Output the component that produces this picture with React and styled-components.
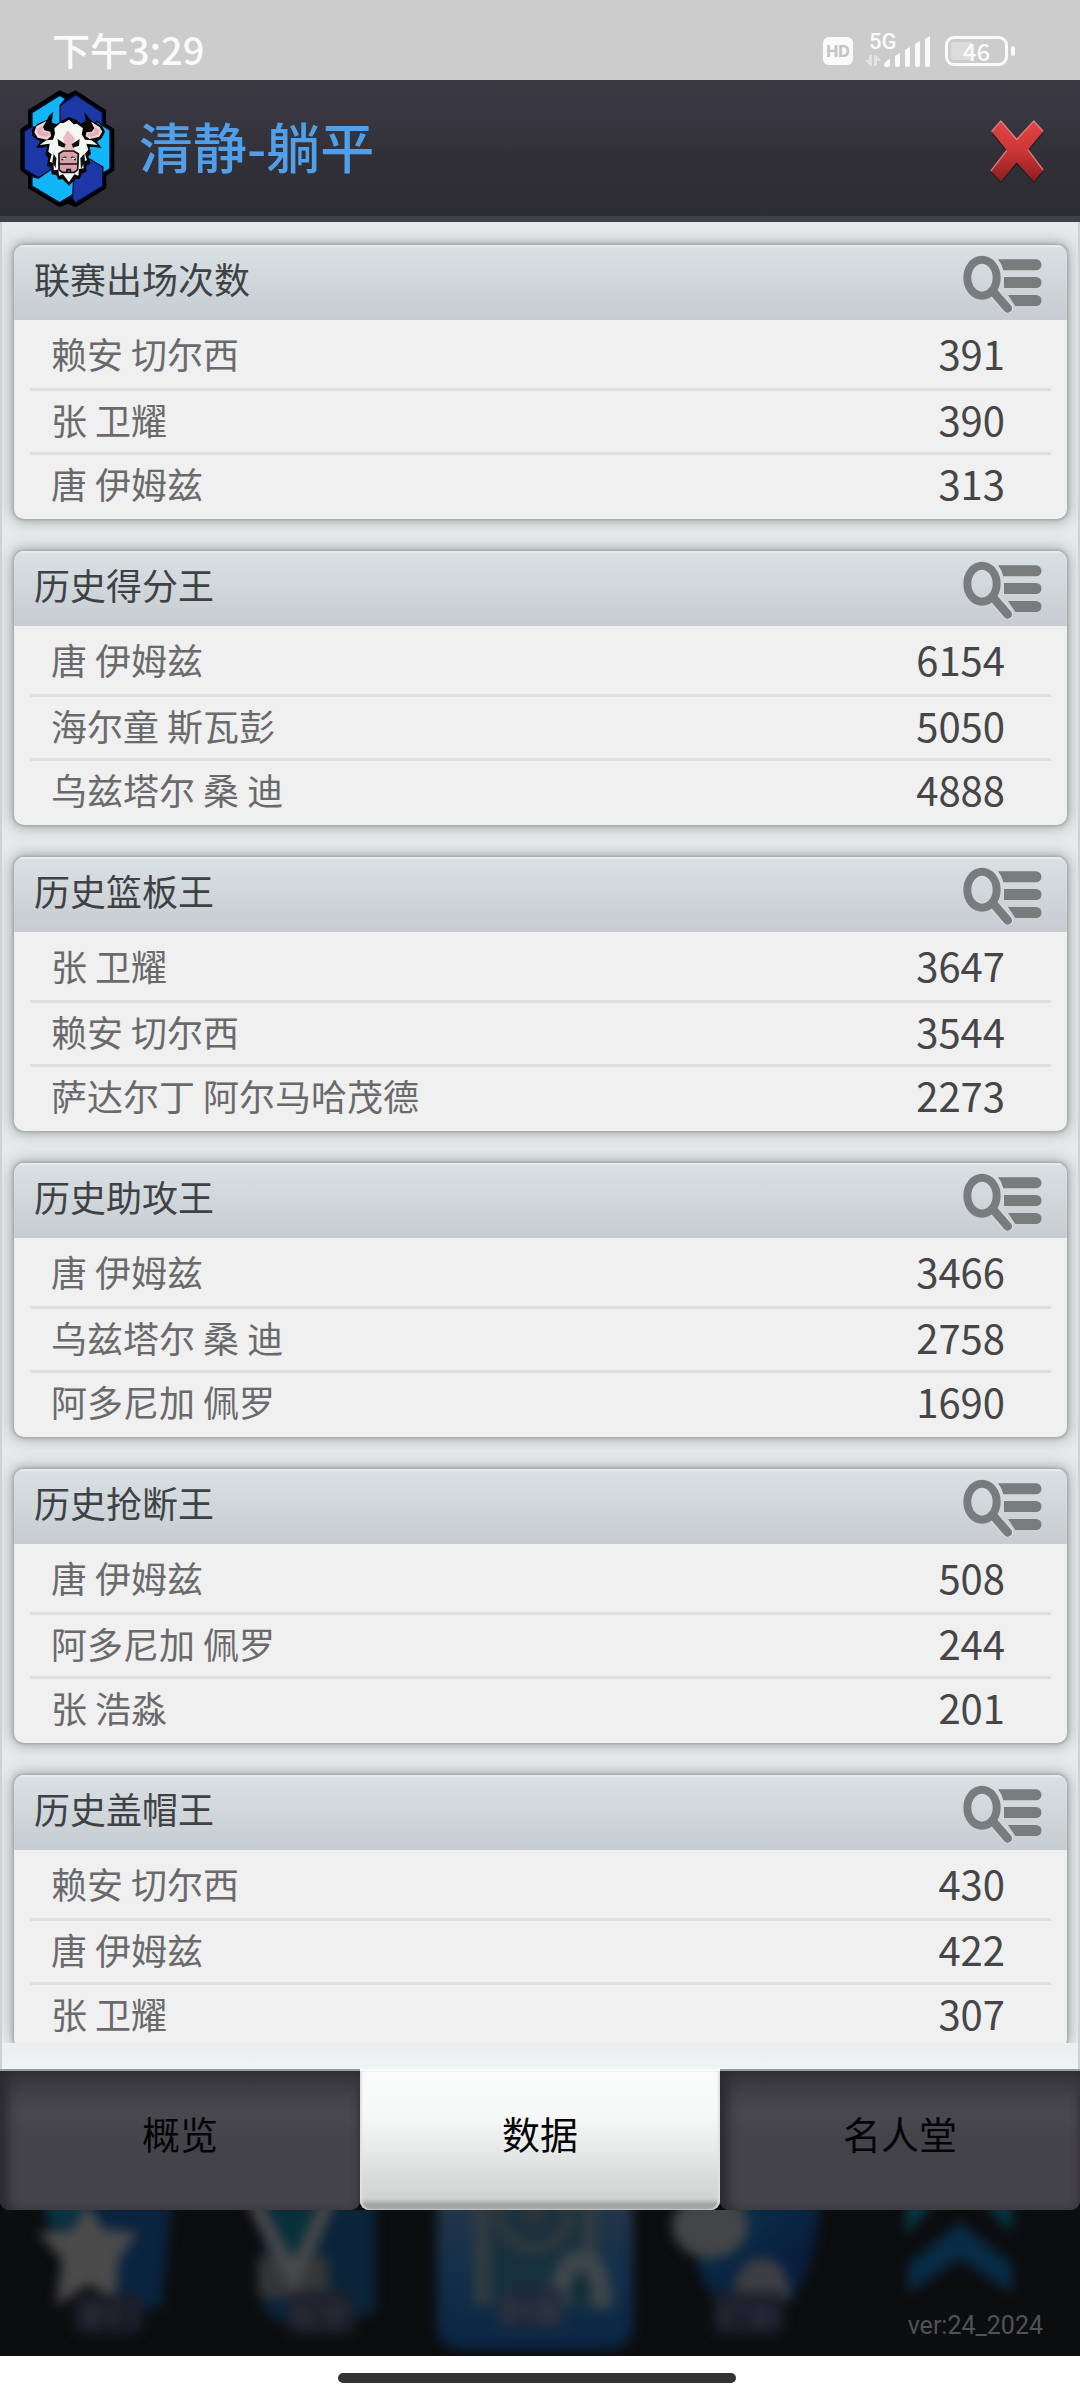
import React from "react";
import styled, { createGlobalStyle } from "styled-components";

const boards = [
  {
    title: "联赛出场次数",
    players: [
      { name: "赖安 切尔西", value: 391 },
      { name: "张 卫耀", value: 390 },
      { name: "唐 伊姆兹", value: 313 },
    ],
  },
  {
    title: "历史得分王",
    players: [
      { name: "唐 伊姆兹", value: 6154 },
      { name: "海尔童 斯瓦彭", value: 5050 },
      { name: "乌兹塔尔 桑 迪", value: 4888 },
    ],
  },
  {
    title: "历史篮板王",
    players: [
      { name: "张 卫耀", value: 3647 },
      { name: "赖安 切尔西", value: 3544 },
      { name: "萨达尔丁 阿尔马哈茂德", value: 2273 },
    ],
  },
  {
    title: "历史助攻王",
    players: [
      { name: "唐 伊姆兹", value: 3466 },
      { name: "乌兹塔尔 桑 迪", value: 2758 },
      { name: "阿多尼加 佩罗", value: 1690 },
    ],
  },
  {
    title: "历史抢断王",
    players: [
      { name: "唐 伊姆兹", value: 508 },
      { name: "阿多尼加 佩罗", value: 244 },
      { name: "张 浩淼", value: 201 },
    ],
  },
  {
    title: "历史盖帽王",
    players: [
      { name: "赖安 切尔西", value: 430 },
      { name: "唐 伊姆兹", value: 422 },
      { name: "张 卫耀", value: 307 },
    ],
  },
];

const tabs = ["概览", "数据", "名人堂"];

const TeamLogo = () => (
  <svg width="96" height="118" viewBox="28 31 288 354" aria-hidden="true">
    <path
      d="M150 32 174 43 198 32 289 91V132L314 148V272L290 289V326L198 383 174 372 150 383 55 326V289L32 272V148L55 132V91Z"
      fill="#000"
    />
    <g stroke="#04103a" strokeWidth="4">
      <path d="M67 99 150 47 168 57 152 77V150L67 180Z" fill="#12b6f6" />
      <path d="M198 45 278 98V134L240 180H152V77Z" fill="#1c37a6" />
      <path d="M262 125 301 152V267L279 281V262L225 232Z" fill="#12b6f6" />
      <path d="M44 155 68 140 130 180 128 268 86 294 44 268Z" fill="#1c37a6" />
      <path d="M67 290 86 296 128 266 192 300V343L150 369 67 319Z" fill="#12b6f6" />
      <path d="M240 238 279 262V319L198 369 188 356 192 300Z" fill="#1c37a6" />
    </g>
    <path
      d="M131 96 118 108 112 120 84 132 66 150 68 168 82 180 92 184 80 204 98 204 112 200 108 226 116 234 112 258 124 264 126 284 140 286 146 300 158 298 178 318 198 298 210 298 216 282 230 276 230 258 242 252 236 230 244 224 240 202 256 202 276 206 262 186 276 176 286 156 278 140 244 122 224 98 228 124 214 132 202 122 178 112 154 124 140 134 126 128Z"
      fill="#050505"
    />
    <path d="M110 124 80 140 74 158 84 174 112 180 124 170 122 156 104 152 100 142Z" fill="#f0d5d8" />
    <path d="M100 136 82 148 86 166 108 172 120 166 116 158 98 156Z" fill="#e5aebb" />
    <path d="M244 126 270 142 278 156 268 172 240 178 228 170 230 158 246 156 254 146Z" fill="#f0d5d8" />
    <path d="M256 142 270 152 264 166 244 172 232 166 236 160 252 158Z" fill="#e5aebb" />
    <path
      d="M178 120 162 130 152 130 134 146 136 162 130 180 110 182 90 196 120 192 116 216 126 224 120 246 132 250 132 272 146 270 148 288 160 284 178 308 194 284 206 288 208 268 222 266 220 246 232 242 226 222 236 210 230 192 264 196 246 182 226 180 216 164 220 146 202 132 192 134Z"
      fill="#f6f6f4"
    />
    <path d="M174 152 160 176 166 198 160 212H196L188 198 196 176Z" fill="#e9bdc4" />
    <path d="M144 178 168 194 164 204 146 198Z" fill="#111" />
    <path d="M210 178 186 194 190 204 208 198Z" fill="#111" />
    <path d="M132 222 140 236 138 266 128 246Z" fill="#111" />
    <path d="M224 222 212 236 214 268 226 244Z" fill="#111" />
    <path
      d="M148 222 160 214H192L206 222 204 270 194 278H158L148 270Z"
      fill="#dba0aa"
      stroke="#111"
      strokeWidth="5"
    />
    <path
      d="M147 253H206M158 242Q158 230 170 234M196 242Q196 230 184 234M172 278V270H182V278"
      fill="none"
      stroke="#111"
      strokeWidth="5"
    />
    <path d="M158 236H168M186 236H196" stroke="#fff" strokeWidth="4" />
  </svg>
);

const CloseIcon = () => (
  <svg width="62" height="70" viewBox="20 48 186 212" aria-hidden="true">
    <defs>
      <linearGradient id="closeFill" x1="0" y1="0" x2="0" y2="1">
        <stop offset="0" stopColor="#e24444" />
        <stop offset="0.5" stopColor="#cd3636" />
        <stop offset="1" stopColor="#8e1c20" />
      </linearGradient>
    </defs>
    <path
      d="M64 68 112 124 164 68 192 101 146 156 192 218 164 252 112 196 64 252 34 220 82 158 36 101Z"
      fill="#201a20"
      opacity="0.8"
    />
    <path
      d="M64 62 112 118 164 62 192 95 146 150 192 212 164 246 112 188 64 246 34 214 82 152 36 95Z"
      fill="url(#closeFill)"
    />
    <path
      d="M36 95 64 63 112 119 164 63 192 94M34 214 82 152M146 150 192 211"
      fill="none"
      stroke="#d98084"
      strokeWidth="4"
    />
  </svg>
);

const SearchListIcon = () => (
  <svg width="80" height="58" viewBox="69 45 240 174" aria-hidden="true">
    <g fill="#797c7d">
      <path d="M174 58H288A16 16 0 0 1 288 91H190Q186 72 174 58Z" />
      <path d="M192 111H288A16 16 0 0 1 288 144H192Z" />
      <path d="M204 165H288A16 16 0 0 1 288 198H226Z" />
    </g>
    <path d="M160 156 203 205" stroke="#d6dbde" strokeWidth="34" strokeLinecap="round" />
    <ellipse cx="126" cy="113" rx="44" ry="54" fill="none" stroke="#797c7d" strokeWidth="24" />
    <path d="M158 153 203 205" stroke="#797c7d" strokeWidth="26" strokeLinecap="round" />
  </svg>
);

const SignalIcon = () => (
  <svg width="68" height="34" viewBox="0 0 68 34" fill="#fafafa" aria-hidden="true">
    <g opacity="0.5">
      <path d="M4 21H7V32H5L0 26H4Z" />
      <path d="M9 32V21H11L16 27H12V32Z" />
    </g>
    <path d="M19 31Q19 28 25 25V31Q25 33 23 33H21Q19 33 19 31Z" />
    <path d="M30 22 35 19V31Q35 33 33 33H32Q30 33 30 31Z" />
    <path d="M40 16 45 13V31Q45 33 43 33H42Q40 33 40 31Z" />
    <path d="M50 10 55 7V31Q55 33 53 33H52Q50 33 50 31Z" />
    <path d="M60 5 65 2V31Q65 33 63 33H62Q60 33 60 31Z" />
  </svg>
);

// dimmed game menu that shows through under the tab bar
const MenuBackdrop = () => (
  <svg width="100%" height="146" viewBox="0 0 1080 146" preserveAspectRatio="none" aria-hidden="true">
    <defs>
      <filter id="soft" x="-10%" y="-10%" width="120%" height="120%" colorInterpolationFilters="sRGB">
        <feGaussianBlur stdDeviation="6" />
      </filter>
      <linearGradient id="slot" x1="0" y1="0" x2="0" y2="1">
        <stop offset="0" stopColor="#2b3847" />
        <stop offset="0.5" stopColor="#14304a" />
        <stop offset="1" stopColor="#0a2544" />
      </linearGradient>
      <linearGradient id="globe" x1="0" y1="0" x2="1" y2="1">
        <stop offset="0" stopColor="#07394a" />
        <stop offset="0.7" stopColor="#0a1d40" />
        <stop offset="1" stopColor="#08243f" />
      </linearGradient>
    </defs>
    <g filter="url(#soft)">
      <path d="M42-10H172L162 96 130 104 60 40Z" fill="#0a233f" />
      <path d="M44-10H88L70 16 48 14Z" fill="#083442" />
      <path d="M88-6 104 20 138 22 118 50 116 90 88 74 56 96 62 50 38 22 72 20Z" fill="#4b4b4b" />
      <rect x="74" y="84" width="68" height="40" rx="8" fill="#191c27" />
      <path d="M82 100H104M82 110H100M92 92V118M114 94V116M122 98H134V116" stroke="#2d303c" strokeWidth="5" />

      <path d="M262-10H376V100L350 112H276L262 96Z" fill="#0b2439" />
      <path d="M270-10H320L294 50Z" fill="#08303b" />
      <rect x="258" y="46" width="70" height="42" rx="6" fill="#343638" />
      <path d="M254-8 294 68 328-8" fill="none" stroke="#48494a" strokeWidth="15" />
      <rect x="288" y="82" width="66" height="42" rx="8" fill="#1d202b" />
      <path d="M296 92V116M308 92V118M320 100H348M334 92V118" stroke="#2d303c" strokeWidth="5" />

      <rect x="437" y="-30" width="196" height="170" rx="24" fill="url(#slot)" />
      <rect x="474" y="-20" width="126" height="120" fill="#17303e" />
      <path d="M482-10V94M590-10V50" stroke="#343c42" strokeWidth="15" />
      <circle cx="534" cy="4" r="34" fill="none" stroke="#30383d" strokeWidth="12" />
      <circle cx="534" cy="4" r="14" fill="#2b3339" />
      <path d="M558 96Q562 48 582 50T602 98" fill="none" stroke="#3e464b" strokeWidth="20" />
      <circle cx="580" cy="80" r="7" fill="#12292f" />
      <rect x="500" y="78" width="64" height="40" rx="8" fill="#22293a" />
      <path d="M508 88V112M518 100H534M544 88V114M554 90V112" stroke="#363b48" strokeWidth="5" />

      <path d="M690-10H820Q818 50 792 90H716Q690 60 690-10Z" fill="url(#globe)" />
      <ellipse cx="710" cy="16" rx="38" ry="32" fill="#444547" />
      <path d="M732 90Q736 48 762 48T790 90Z" fill="#3c3e42" />
      <rect x="714" y="82" width="70" height="42" rx="8" fill="#1c1f2b" />
      <path d="M724 94V116M736 98H748M760 92V118M754 106H778" stroke="#2d303c" strokeWidth="5" />

      <path d="M906-10H936L906 26ZM1012-10H982L1012 24Z" fill="#073846" />
      <path d="M908 84V54L960 12 1012 54V84L960 48Z" fill="#082c45" />
    </g>
  </svg>
);

const RecordCard = ({ title, players }) => (
  <Card>
    <CardHead>
      <CardTitle>{title}</CardTitle>
      <MoreButton aria-label={title}>
        <SearchListIcon />
      </MoreButton>
    </CardHead>
    <Players>
      {players.map((player) => (
        <Player key={player.name}>
          <span>{player.name}</span>
          <Value>{player.value}</Value>
        </Player>
      ))}
    </Players>
  </Card>
);

const App = () => {
  const [activeTab, setActiveTab] = React.useState("数据");

  return (
    <Screen>
      <GlobalStyle />
      <StatusBar>
        <Clock>下午3:29</Clock>
        <StatusIcons>
          <HdBadge>HD</HdBadge>
          <Signal>
            <SignalIcon />
            <Network>5G</Network>
          </Signal>
          <Battery>46</Battery>
        </StatusIcons>
      </StatusBar>
      <Header>
        <TeamLogo />
        <TeamName>清静-躺平</TeamName>
        <CloseButton aria-label="关闭">
          <CloseIcon />
        </CloseButton>
      </Header>
      <Main>
        <Boards>
          {boards.map((board) => (
            <RecordCard key={board.title} {...board} />
          ))}
        </Boards>
      </Main>
      <TabBar>
        {tabs.map((tab) => (
          <Tab key={tab} $active={tab === activeTab} onClick={() => setActiveTab(tab)}>
            {tab}
          </Tab>
        ))}
      </TabBar>
      <Backdrop>
        <MenuBackdrop />
        <Version>ver:24_2024</Version>
      </Backdrop>
      <HomeArea>
        <HomeBar />
      </HomeArea>
    </Screen>
  );
};

const GlobalStyle = createGlobalStyle`
  * {
    box-sizing: border-box;
  }
  body {
    margin: 0;
    background: #fff;
    font-family: "Noto Sans CJK SC", sans-serif;
  }
  button {
    padding: 0;
    border: none;
    background: none;
    font-family: inherit;
    cursor: pointer;
  }
  svg {
    display: block;
  }
`;
const Screen = styled.div`
  display: flex;
  flex-direction: column;
  height: 100vh;
`;
const StatusBar = styled.div`
  display: flex;
  flex-shrink: 0;
  align-items: center;
  justify-content: space-between;
  height: 80px;
  padding: 22px 72px 0 52px;
  background: #ccc;
  color: #fafafa;
`;
const Clock = styled.span`
  padding-bottom: 4px;
  font-size: 38px;
  font-weight: 500;
  line-height: 56px;
`;
const StatusIcons = styled.div`
  display: flex;
  align-items: center;
  gap: 12px;
`;
const HdBadge = styled.span`
  width: 30px;
  height: 28px;
  border-radius: 6px;
  background: #fafafa;
  color: #c6c6c6;
  font-family: Inter, sans-serif;
  font-size: 16px;
  font-weight: 800;
  line-height: 28px;
  text-align: center;
`;
const Signal = styled.div`
  position: relative;
`;
const Network = styled.span`
  position: absolute;
  top: -4px;
  left: 4px;
  font-family: Roboto, sans-serif;
  font-size: 22px;
  font-weight: 500;
  line-height: 24px;
`;
const Battery = styled.div`
  position: relative;
  width: 63px;
  height: 30px;
  border: 3px solid #fafafa;
  border-radius: 9px;
  background: linear-gradient(to right, #dcdcdc 24px, transparent 24px);
  background-clip: content-box;
  padding: 3px;
  font-size: 24px;
  font-weight: 500;
  line-height: 18px;
  text-align: center;

  &::after {
    content: "";
    position: absolute;
    top: 7px;
    right: -10px;
    width: 4px;
    height: 10px;
    border-radius: 2px;
    background: #fafafa;
  }
`;
const Header = styled.header`
  display: flex;
  flex-shrink: 0;
  align-items: center;
  height: 142px;
  padding: 2px 32px 0 19px;
  border-bottom: 6px solid #3c4246;
  background: linear-gradient(#3b3942, #37353f 30%, #313036 60%, #2d2c32);
`;
const TeamName = styled.h1`
  flex: 1;
  margin: 0;
  padding: 0 0 6px 24px;
  color: #509fe8;
  font-size: 54px;
  font-weight: 500;
  line-height: 80px;
`;
const CloseButton = styled.button`
  padding-top: 4px;
`;
const Main = styled.main`
  display: flex;
  flex: 1;
  flex-direction: column;
  min-height: 0;
  padding-bottom: 26px;
  border: solid #cdd2d3;
  border-width: 0 2px;
  background: linear-gradient(#e6eaeb, #e6eaeb 1800px, #eff4f5);
`;
const Boards = styled.div`
  display: flex;
  flex: 1;
  flex-direction: column;
  gap: 32px;
  min-height: 0;
  padding: 23px 11px 0 12px;
  overflow: hidden;
`;
const Card = styled.section`
  flex-shrink: 0;
  border-radius: 10px;
  background: #f0f0f0;
  box-shadow: 0 0 3px 1px #a0a4a5, 0 0 14px 2px rgba(90, 98, 102, 0.5);
  overflow: hidden;
`;
const CardHead = styled.div`
  display: flex;
  align-items: center;
  justify-content: space-between;
  height: 75px;
  padding: 0 24px 0 20px;
  background: linear-gradient(#dae1e4, #c6ccd1);
  box-shadow: inset 0 2px 1px #e9edee;
`;
const CardTitle = styled.h2`
  margin: 0;
  padding-bottom: 10px;
  color: #3f4244;
  font-size: 36px;
  font-weight: 400;
  line-height: 52px;
`;
const MoreButton = styled.button`
  padding-top: 2px;
`;
const Players = styled.ul`
  margin: 0;
  padding: 4px 16px 3px;
  list-style: none;
`;
const Player = styled.li`
  display: flex;
  align-items: center;
  justify-content: space-between;
  height: 64px;
  padding: 0 46px 6px 21px;
  color: #6a6a6c;
  font-size: 36px;

  & + & {
    border-top: 3px solid #dfdfdf;
  }
`;
const Value = styled.span`
  color: #464648;
  font-size: 40px;
`;
const TabBar = styled.nav`
  display: grid;
  grid-template-columns: repeat(3, 1fr);
  flex-shrink: 0;
  height: 141px;
  background: #0b0b0d;
`;
const Tab = styled.button`
  height: 100%;
  padding-bottom: 16px;
  border-radius: 0 0 9px 9px;
  border-top: 2px solid ${({ $active }) => ($active ? "#fafcfb" : "#9b9ca0")};
  background: ${({ $active }) =>
    $active
      ? "linear-gradient(#fafcfb, #f6f8f7 35%, #d0d2d1 92%, #a2a5a4 96%)"
      : "linear-gradient(#333238, #424147 18%, #49484e 32%, #444349 50%, #444349)"};
  box-shadow: ${({ $active }) =>
    $active
      ? "inset 2px 0 2px #dfe2e1, inset -2px 0 2px #dfe2e1"
      : "inset 14px 0 12px -6px #2b2a2f, inset -4px 0 6px -2px #343338"};
  color: #050507;
  font-size: 38px;
`;
const Backdrop = styled.div`
  position: relative;
  flex-shrink: 0;
  background: #0c0d0f;
  overflow: hidden;
`;
const Version = styled.span`
  position: absolute;
  right: 37px;
  bottom: 15px;
  color: #515255;
  font-family: Roboto, sans-serif;
  font-size: 25px;
  line-height: 30px;
`;
const HomeArea = styled.div`
  display: flex;
  flex-shrink: 0;
  align-items: center;
  justify-content: center;
  height: 44px;
  padding-right: 6px;
  background: #fff;
`;
const HomeBar = styled.div`
  width: 37%;
  height: 10px;
  border-radius: 5px;
  background: #333;
`;

export default App;
